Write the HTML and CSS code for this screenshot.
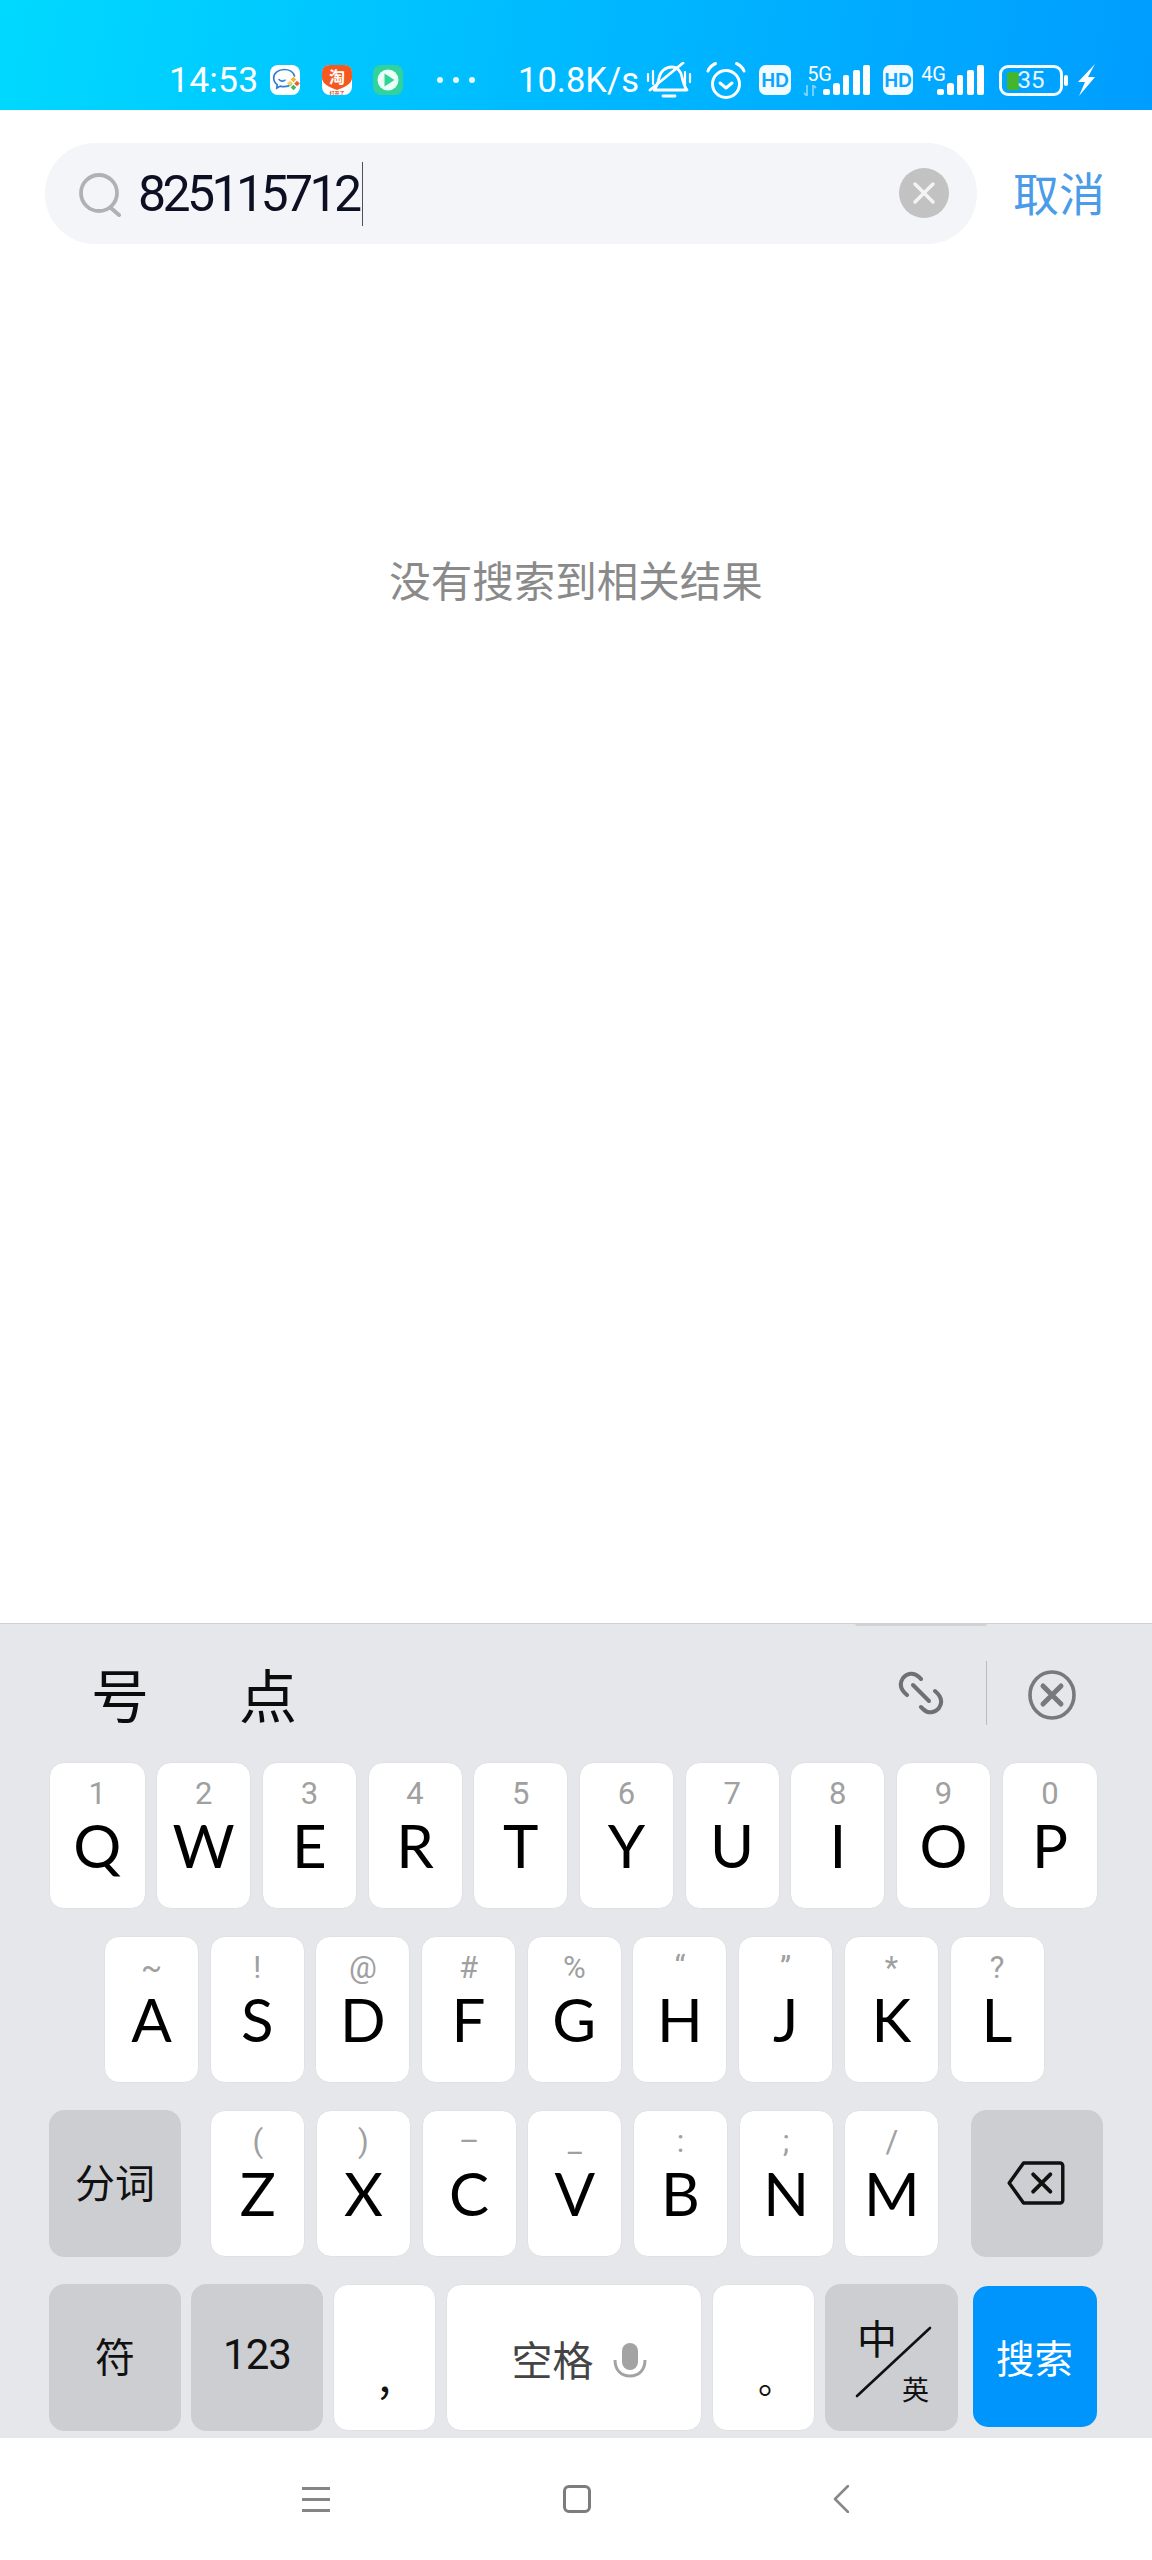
FILE: index.html
```html
<!DOCTYPE html>
<html lang="zh">
<head>
<meta charset="utf-8">
<title>搜索</title>
<link rel="stylesheet" href="styles.css">
</head>
<body>
<div class="app">
  <header class="status">
    <span class="time">14:53</span>
    <svg class="ni ni-chat" viewBox="0 0 30 30"><rect width="30" height="30" rx="8" fill="#fff"/><path d="M21 19.500c-1.800 1.400-4.200 2.200-6.800 2.200-1.400 0-2.700-.2-3.900-.6l-3.500 2 .4-3.500C5 18 3.700 15.600 3.700 13 3.700 8.200 8.400 4.500 14.200 4.500c5 0 9.200 2.700 10.300 6.500" fill="none" stroke="#2f7fd6" stroke-width="1.700" stroke-linecap="round"/><path d="M9 14.500c1.500 1.600 4 2 6 .6" fill="none" stroke="#2f7fd6" stroke-width="1.500" stroke-linecap="round"/><rect x="21.500" y="12.500" width="4" height="4" transform="rotate(45 23.500 14.500)" fill="#f2b632"/><rect x="25" y="16.500" width="4" height="4" transform="rotate(45 27 18.500)" fill="#e8633a"/><rect x="21.500" y="20.500" width="4" height="4" transform="rotate(45 23.500 22.500)" fill="#3fb86b"/><rect x="18" y="16.500" width="4" height="4" transform="rotate(45 20 18.500)" fill="#f0d060"/></svg>
    <svg class="ni ni-tao" viewBox="0 0 30 30"><rect width="30" height="30" rx="8" fill="#fff"/><path d="M8 0h14c5 0 8 3 8 8v5c0 5-6 9-15 12C6 22 0 18 0 13V8c0-5 3-8 8-8z" fill="#f4591f"/><text x="15" y="18" class="tao-t">淘</text><text x="15" y="29.500" class="tao-s">打开了</text></svg>
    <svg class="ni ni-play" viewBox="0 0 30 30"><rect width="30" height="30" rx="8" fill="#31d39b"/><circle cx="15" cy="15" r="10.500" fill="#eafff6"/><path d="M11.500 8.500l10 6.500-10 6.500z" fill="#31d39b"/></svg>
    <span class="dots"><i></i><i></i><i></i></span>
    <span class="speed">10.8K/s</span>
    <svg class="si si-bell" viewBox="0 0 46 36" fill="none" stroke="#fff" stroke-width="2.800" stroke-linecap="round" stroke-linejoin="round"><path d="M8 28c3-3 4-7 5-12 1-6 6-11 13-11 5 0 9 4 10 10 1 5 2 9 5 13z"/><path d="M17 34h12"/><path d="M4 28L37 1"/><path d="M2 12v7M7 9v13M39 10v13M44 12v8" stroke-width="2.200"/></svg>
    <svg class="si si-alarm" viewBox="0 0 40 38" fill="none" stroke="#fff" stroke-width="3" stroke-linecap="round" stroke-linejoin="round"><circle cx="20" cy="23" r="13.500"/><path d="M14 22l6 5 6-5"/><path d="M2 10c1.500-3.500 4-6 7.500-7.500M38 10c-1.500-3.500-4-6-7.500-7.500"/></svg>
    <span class="hd hd-a">HD</span>
    <span class="net net-a"><b>5G</b><svg class="arrows" viewBox="0 0 14 11"><path d="M4 0v11L1 8M10 11V0l3 3" fill="none" stroke="#7fd4ff" stroke-width="1.800"/></svg></span>
    <svg class="bars" viewBox="0 0 47 30"><rect x="0" y="24" width="7" height="6" rx="2" fill="#fff"/><rect x="10" y="18" width="7" height="12" rx="2.500" fill="#fff"/><rect x="20" y="10" width="6" height="20" rx="2" fill="#fff"/><rect x="30" y="5" width="7" height="25" rx="2" fill="#fff"/><rect x="40" y="0" width="7" height="30" rx="2" fill="#fff"/></svg>
    <span class="hd hd-b">HD</span>
    <span class="net net-b"><b>4G</b></span>
    <svg class="bars bars-b" viewBox="0 0 47 30"><rect x="0" y="24" width="7" height="6" rx="2" fill="#fff"/><rect x="10" y="18" width="7" height="12" rx="2.500" fill="#fff"/><rect x="20" y="10" width="6" height="20" rx="2" fill="#fff"/><rect x="30" y="5" width="7" height="25" rx="2" fill="#fff"/><rect x="40" y="0" width="7" height="30" rx="2" fill="#fff"/></svg>
    <span class="batt"><span class="batt-fill"></span><span class="batt-n">35</span></span>
    <span class="batt-tip"></span>
    <svg class="bolt" viewBox="0 0 18 32"><path d="M18 0L1 18h7L2 32l16-19h-7z" fill="#fff"/></svg>
  </header>

  <section class="searchrow">
    <div class="searchbox">
      <svg class="lens" viewBox="0 0 42 44" fill="none" stroke="#b0b1b3" stroke-width="3.800" stroke-linecap="round"><circle cx="20" cy="20" r="18"/><path d="M32 35l8 7" stroke-width="4"/></svg>
      <span class="query">825115712</span><span class="caret"></span>
      <span class="clear"><svg viewBox="0 0 50 50" class="clear-x"><path d="M16 16l18 18M34 16L16 34" stroke="#f4f4f4" stroke-width="3.500" stroke-linecap="round"/></svg></span>
    </div>
    <span class="cancel">取消</span>
  </section>

  <main class="results"><p class="empty">没有搜索到相关结果</p></main>

  <section class="kbd">
    <span class="kbd-tab"></span>
    <div class="cands">
      <span class="cand cand-a">号</span>
      <span class="cand cand-b">点</span>
      <svg class="tool-link" viewBox="0 0 50 50" fill="none" stroke="#6d7075" stroke-width="4" stroke-linecap="round"><path d="M11 27C5 22 3 16 7 10c4-5 11-6 16-1l2 2"/><path d="M17 17l16 16"/><path d="M39 23c6 5 8 11 4 17-4 5-11 6-16 1l-2-2"/></svg>
      <span class="tool-div"></span>
      <svg class="tool-x" viewBox="0 0 48 50" fill="none" stroke="#76797d"><ellipse cx="24" cy="25" rx="22" ry="23" stroke-width="3.600"/><path d="M15 16l18 18M33 16L15 34" stroke-width="5" stroke-linecap="round"/></svg>
    </div>
    <div class="row row1">
      <div class="key edge"><span class="h">1</span><span class="l">Q</span></div>
      <div class="key"><span class="h">2</span><span class="l">W</span></div>
      <div class="key"><span class="h">3</span><span class="l">E</span></div>
      <div class="key"><span class="h">4</span><span class="l">R</span></div>
      <div class="key"><span class="h">5</span><span class="l">T</span></div>
      <div class="key"><span class="h">6</span><span class="l">Y</span></div>
      <div class="key"><span class="h">7</span><span class="l">U</span></div>
      <div class="key"><span class="h">8</span><span class="l">I</span></div>
      <div class="key"><span class="h">9</span><span class="l">O</span></div>
      <div class="key edge"><span class="h">0</span><span class="l">P</span></div>
    </div>
    <div class="row row2">
      <div class="key"><span class="h">~</span><span class="l">A</span></div>
      <div class="key"><span class="h">!</span><span class="l">S</span></div>
      <div class="key"><span class="h">@</span><span class="l">D</span></div>
      <div class="key"><span class="h">#</span><span class="l">F</span></div>
      <div class="key"><span class="h">%</span><span class="l">G</span></div>
      <div class="key"><span class="h">“</span><span class="l">H</span></div>
      <div class="key"><span class="h">”</span><span class="l">J</span></div>
      <div class="key"><span class="h">*</span><span class="l">K</span></div>
      <div class="key"><span class="h">?</span><span class="l">L</span></div>
    </div>
    <div class="row row3">
      <div class="key fn fn-wide fn-a"><span class="fn-t">分词</span></div>
      <div class="key"><span class="h">(</span><span class="l">Z</span></div>
      <div class="key"><span class="h">)</span><span class="l">X</span></div>
      <div class="key"><span class="h">–</span><span class="l">C</span></div>
      <div class="key"><span class="h">_</span><span class="l">V</span></div>
      <div class="key"><span class="h">:</span><span class="l">B</span></div>
      <div class="key"><span class="h">;</span><span class="l">N</span></div>
      <div class="key"><span class="h">/</span><span class="l">M</span></div>
      <div class="key fn fn-wide fn-del"><svg class="del" viewBox="0 0 60 46" fill="none" stroke="#111" stroke-width="3.600" stroke-linejoin="round" stroke-linecap="round"><path d="M17 2h38a3 3 0 0 1 3 3v36a3 3 0 0 1-3 3H17L2 23z"/><path d="M27 14l18 18M45 14L27 32" stroke-width="4"/></svg></div>
    </div>
    <div class="row row4">
      <div class="key fn fn-wide"><span class="fn-t">符</span></div>
      <div class="key fn fn-wide"><span class="fn-n">123</span></div>
      <div class="key punct"><span class="p">,</span></div>
      <div class="key space"><span class="sp-t">空格</span><svg class="mic" viewBox="0 0 34 36" fill="none"><rect x="9" y="0" width="16" height="27" rx="8" fill="#a3a3a3"/><path d="M2 17c0 10 6 16 15 16s15-6 15-16" stroke="#a3a3a3" stroke-width="3"/></svg></div>
      <div class="key punct"><span class="p p-o">。</span></div>
      <div class="key fn fn-wide lang"><span class="zh">中</span><span class="en">英</span><svg class="slash" viewBox="0 0 131 147"><path d="M30 112L103 44" stroke="#111" stroke-width="2.600" stroke-linecap="round"/></svg></div>
      <div class="key go">搜索</div>
    </div>
  </section>

  <nav class="navbar">
    <span class="burger"><i></i><i></i><i></i></span>
    <span class="sq"></span>
    <svg class="back" viewBox="0 0 16 28" fill="none" stroke="#888" stroke-width="2.600" stroke-linecap="round" stroke-linejoin="round"><path d="M15 1L2 14l13 13"/></svg>
  </nav>
</div>
</body>
</html>
```
FILE: styles.css
```css
* { box-sizing: border-box; }
html, body { margin: 0; padding: 0; background: #fff; }
body { font-family: Roboto, "Noto Sans CJK SC", sans-serif; }
.app { width: 1152px; height: 2560px; display: flex; flex-direction: column; overflow: hidden; }

/* status bar */
.status { height: 110px; flex: none; display: flex; align-items: center; padding: 50px 0 0 169px; color: #fff;
  background: linear-gradient(100deg, #00d9ff 0%, #00bcff 45%, #009dff 100%); }
.time { font-size: 35.500px; line-height: 60px; width: 91px; letter-spacing: .2px; flex: none; }
.ni { width: 30px; height: 30px; flex: none; }
.ni-chat { margin-left: 10px; }
.ni-tao { margin-left: 22px; }
.ni-play { margin-left: 21px; }
.tao-t { font: 700 16px "Noto Sans CJK SC", sans-serif; fill: #fff; text-anchor: middle; }
.tao-s { font: 700 5px "Noto Sans CJK SC", sans-serif; fill: #e8401a; text-anchor: middle; }
.dots { display: flex; gap: 10px; margin-left: 34px; width: 38px; flex: none; }
.dots i { width: 6px; height: 6px; border-radius: 50%; background: #fff; opacity: .9; }
.speed { font-size: 34.500px; margin-left: 43px; width: 122px; line-height: 60px; flex: none; white-space: nowrap; }
.si { flex: none; }
.si-bell { width: 46px; height: 36px; margin-left: 6px; }
.si-alarm { width: 40px; height: 38px; margin-left: 14px; }
.hd { height: 30px; flex: none; border-radius: 7px; background: #f2fbff; color: #0aa6ff; font: 900 18px/30px Lato, sans-serif; text-align: center; }
.hd-a { width: 32px; margin-left: 13px; }
.hd-b { width: 30px; margin-left: 13px; }
.net { flex: none; display: flex; flex-direction: column; align-items: flex-end; height: 32px; }
.net b { font: 400 20px/20px Roboto, sans-serif; }
.net-a { margin-left: 12px; width: 29px; }
.net-b { margin-left: 8px; width: 25px; }
.arrows { width: 14px; height: 11px; margin-top: 1px; align-self: flex-start; }
.bars { width: 47px; height: 30px; flex: none; margin-left: -9px; }
.batt { position: relative; flex: none; margin-left: 15px; width: 64px; height: 31px; border: 3px solid #f2fbff; border-radius: 9px; display: flex; align-items: center; justify-content: center; }
.batt-fill { position: absolute; left: 5px; top: 4px; bottom: 3px; width: 12px; background: #43b52e; border-radius: 2px; }
.batt-n { position: relative; font: 400 24px/25px Roboto, sans-serif; color: #e8f6ff; }
.batt-tip { flex: none; width: 4px; height: 11px; background: #fff; margin-left: 1px; border-radius: 2px; }
.bolt { flex: none; width: 18px; height: 32px; margin-left: 9px; }

/* search */
.searchrow { flex: none; display: flex; align-items: flex-start; padding: 33px 0 0 45px; height: 143px; }
.searchbox { width: 932px; height: 101px; border-radius: 50px; background: #f4f5f9; display: flex; align-items: center; padding-left: 34px; }
.lens { width: 42px; height: 44px; flex: none; margin-top: 2px; }
.query { margin-left: 17px; font-size: 50px; letter-spacing: -3.600px; color: #0d0f22; line-height: 60px; }
.caret { width: 1px; height: 64px; background: #4b4f5e; margin-left: 3px; flex: none; }
.clear { width: 50px; height: 50px; border-radius: 50%; background: #c2c2c2; flex: none; margin-left: auto; margin-right: 28px; margin-top: -1px; display: flex; }
.clear-x { width: 50px; height: 50px; }
.cancel { font: 400 46px/60px "Noto Sans CJK SC", sans-serif; color: #4a9be8; margin-left: 36px; padding-top: 18px; box-sizing: content-box; }

/* results */
.results { flex: 1; min-height: 0; background: #fff; }
.empty { margin: 296px 0 0; text-align: center; font: 400 41.500px/60px "Noto Sans CJK SC", sans-serif; color: #8a8a8a; }

/* keyboard */
.kbd { position: relative; flex: none; height: 815px; background: #e5e7ea; border-top: 1px solid #cfd1d4; }
.kbd-tab { position: absolute; left: 855px; top: -1px; width: 132px; height: 3px; background: #cfd1d4; border-radius: 0 0 3px 3px; }
.cands { height: 138px; position: relative; display: flex; align-items: center; }
.cand { font: 400 58px/60px "Noto Sans CJK SC", sans-serif; color: #0c0c0c; margin-top: 0; flex: none; }
.cand-a { margin-left: 91px; }
.cand-b { margin-left: 90px; }
.tool-link { width: 50px; height: 50px; flex: none; margin-left: 599px; }
.tool-div { width: 1px; height: 64px; background: #b9bbbf; flex: none; margin-left: 40px; }
.tool-x { width: 48px; height: 50px; flex: none; margin-left: 41px; margin-top: 4px; }

.row { display: flex; height: 147px; gap: 10.700px; margin-bottom: 27px; align-items: stretch; }
.row1 { padding-left: 49px; }
.row2 { padding-left: 104px; }
.row3 { padding-left: 49px; }
.row4 { padding-left: 49px; gap: 10px; }
.key { width: 95px; flex: none; background: #fff; border: 1px solid #e0e1e5; border-radius: 15px; display: flex; flex-direction: column; align-items: center; padding-top: 16px; color: #000; }
.edge { width: 96.500px; }
.h { font: 400 31px/30px Roboto, sans-serif; color: #a0a0a0; height: 30px; }
.l { font: 400 60px/60px Lato, sans-serif; margin-top: 6px; }

.fn { background: #cdced2; border-color: #cdced2; justify-content: center; padding-top: 0; }
.fn-wide { width: 132px; }
.fn-a { margin-right: 18.500px; }
.fn-del { margin-left: 21px; }
.fn-t { font: 400 40px/44px "Noto Sans CJK SC", sans-serif; color: #111; margin-top: -6px; }
.fn-n { font: 400 42px/44px Roboto, sans-serif; color: #111; margin-top: -6px; letter-spacing: -1px; }
.del { width: 58px; height: 44px; margin-right: 2px; margin-top: -2px; }
.punct { width: 103px; justify-content: flex-end; padding: 0 0 35px; }
.p { font: 400 44px/44px "Noto Sans CJK SC", sans-serif; color: #111; }
.p-o { font-size: 36px; margin-left: 25px; margin-bottom: -5px; }
.space { width: 256px; flex-direction: row; justify-content: center; gap: 19px; padding: 0 0 0 10px; }
.sp-t { font: 400 41px/44px "Noto Sans CJK SC", sans-serif; color: #444; }
.mic { width: 34px; height: 36px; margin-top: 6px; }
.lang { position: relative; padding: 0; width: 133px; }
.zh { position: absolute; left: 31px; top: 30px; font: 400 40px/44px "Noto Sans CJK SC", sans-serif; color: #111; }
.en { position: absolute; left: 76px; top: 88px; font: 400 27px/32px "Noto Sans CJK SC", sans-serif; color: #111; }
.slash { position: absolute; left: 1px; top: -1px; width: 131px; height: 147px; }
.go { width: 124px; height: 141px; margin: 2px 0 0 4.500px; background: #0095fd; border: 0; border-radius: 15px; justify-content: center; padding: 0 0 2px; color: #fff; font: 400 38.500px/44px "Noto Sans CJK SC", sans-serif; }

/* nav */
.navbar { flex: none; height: 122px; background: #fff; display: flex; align-items: center; padding: 0 0 0 302px; }
.burger { width: 28px; display: flex; flex-direction: column; gap: 8px; }
.burger i { height: 3px; background: #858585; }
.sq { width: 28px; height: 28px; border: 3px solid #7c7c7c; border-radius: 6px; margin-left: 233px; }
.back { width: 16px; height: 28px; margin-left: 242px; }
```
